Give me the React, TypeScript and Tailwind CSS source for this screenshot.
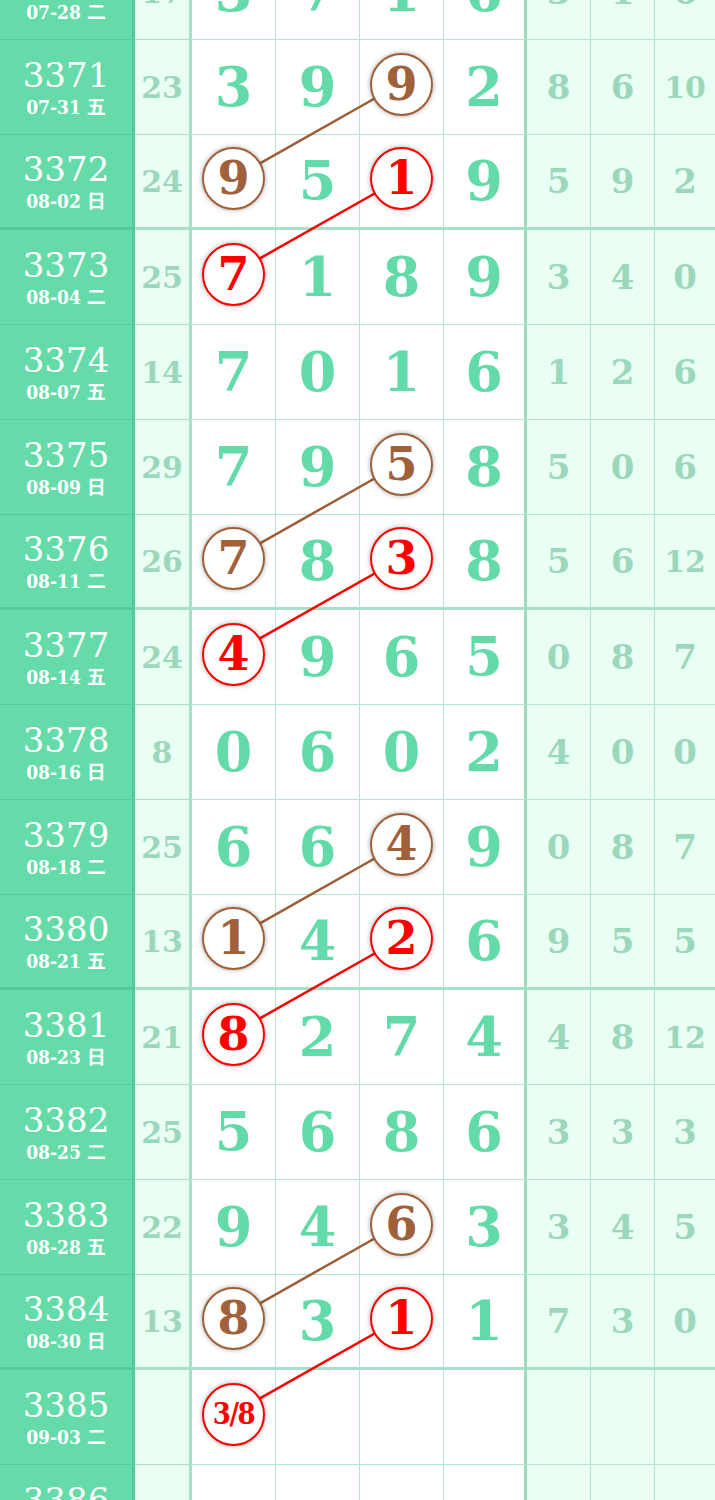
import React from 'react';

type Row = { n: number; d: string; s?: number; a: number[]; b: number[] };

const rows: Row[] = [
  { n: 3370, d: '07-28 二', s: 17, a: [3, 7, 1, 6], b: [3, 1, 6] },
  { n: 3371, d: '07-31 五', s: 23, a: [3, 9, 9, 2], b: [8, 6, 10] },
  { n: 3372, d: '08-02 日', s: 24, a: [9, 5, 1, 9], b: [5, 9, 2] },
  { n: 3373, d: '08-04 二', s: 25, a: [7, 1, 8, 9], b: [3, 4, 0] },
  { n: 3374, d: '08-07 五', s: 14, a: [7, 0, 1, 6], b: [1, 2, 6] },
  { n: 3375, d: '08-09 日', s: 29, a: [7, 9, 5, 8], b: [5, 0, 6] },
  { n: 3376, d: '08-11 二', s: 26, a: [7, 8, 3, 8], b: [5, 6, 12] },
  { n: 3377, d: '08-14 五', s: 24, a: [4, 9, 6, 5], b: [0, 8, 7] },
  { n: 3378, d: '08-16 日', s: 8, a: [0, 6, 0, 2], b: [4, 0, 0] },
  { n: 3379, d: '08-18 二', s: 25, a: [6, 6, 4, 9], b: [0, 8, 7] },
  { n: 3380, d: '08-21 五', s: 13, a: [1, 4, 2, 6], b: [9, 5, 5] },
  { n: 3381, d: '08-23 日', s: 21, a: [8, 2, 7, 4], b: [4, 8, 12] },
  { n: 3382, d: '08-25 二', s: 25, a: [5, 6, 8, 6], b: [3, 3, 3] },
  { n: 3383, d: '08-28 五', s: 22, a: [9, 4, 6, 3], b: [3, 4, 5] },
  { n: 3384, d: '08-30 日', s: 13, a: [8, 3, 1, 1], b: [7, 3, 0] },
  { n: 3385, d: '09-03 二', a: [], b: [] },
  { n: 3386, d: '09-05 五', a: [], b: [] },
];

// marked cells: "row-col" -> colour
const marks: Record<string, 'brown' | 'red'> = {
  '3371-2': 'brown', '3372-0': 'brown', '3372-2': 'red', '3373-0': 'red',
  '3375-2': 'brown', '3376-0': 'brown', '3376-2': 'red', '3377-0': 'red',
  '3379-2': 'brown', '3380-0': 'brown', '3380-2': 'red', '3381-0': 'red',
  '3383-2': 'brown', '3384-0': 'brown', '3384-2': 'red', '3385-0': 'red',
};

const ROW_H = 95;
const colX = [234, 318, 402, 485];
const serif = { fontFamily: '"DejaVu Serif", serif' };

// lines go from the 3rd column of one row to the 1st column of the next
const links = rows.flatMap((r, i) =>
  marks[`${r.n}-2`] ? [{ i, color: marks[`${r.n}-2`] === 'red' ? '#ff0000' : '#9e5f38' }] : []
);

function Circle({ color, children, small }: { color: 'brown' | 'red'; children: React.ReactNode; small?: boolean }) {
  const c = color === 'red' ? 'border-[#ff0000] text-[#ff0000]' : 'border-[#a0603a] text-[#a0603a]';
  return (
    <div className={`relative z-10 -mt-[5px] w-[63px] h-[63px] rounded-full bg-white border-[2.5px] ${c} flex items-center justify-center shadow-[0_0_5px_rgba(0,0,0,0.35)] font-bold ${small ? 'text-[29px] tracking-[-1.5px] font-stretch-condensed' : 'text-[46px]'}`}>
      {children}
    </div>
  );
}

export default function App() {
  return (
    <div className="w-[715px] h-[1500px] overflow-hidden bg-white" style={serif}>
      <div className="relative -mt-[55px]">
        {rows.map(r => {
          const thick = (r.n - 3372) % 4 === 0;
          const bb = thick ? 'border-b-[3px]' : 'border-b-[1.5px]';
          return (
            <div key={r.n} className="grid grid-cols-[135px_57px_84px_84px_84px_83px_64px_64px_60px] h-[95px]">
              <div className={`bg-[#64dba9] border-r-[3px] border-r-[#57c996] ${bb} border-b-[#57c996] flex flex-col items-center justify-center text-white`}>
                <div className="text-[34px] leading-[38px]">{r.n}</div>
                <div className="text-[19px] leading-[24px] font-bold font-stretch-condensed">
                  {r.d.split(' ')[0]} <span style={{ fontFamily: '"Noto Sans CJK SC", sans-serif' }}>{r.d.split(' ')[1]}</span>
                </div>
              </div>
              <div className={`bg-[#eafff4] border-r-[3px] border-r-[#a6e0c6] ${bb} border-b-[#a6e0c6] flex items-center justify-center text-[30px] font-bold text-[#9bd8bb]`}>
                {r.s}
              </div>
              {[0, 1, 2, 3].map(c => {
                const m = marks[`${r.n}-${c}`];
                const v = r.n === 3385 && c === 0 ? '3/8' : r.a[c];
                return (
                  <div key={c} className={`${c === 3 ? 'border-r-[3px] border-r-[#9edcc1]' : 'border-r-[1.5px] border-r-[#b2e7cf]'} ${bb} ${thick ? 'border-b-[#a6e0c6]' : 'border-b-[#b2e7cf]'} flex items-center justify-center text-[54px] font-bold text-[#62dba8]`}>
                    {m ? <Circle color={m} small={r.n === 3385}>{v}</Circle> : v}
                  </div>
                );
              })}
              {[0, 1, 2].map(c => (
                <div key={c} className={`bg-[#eafff4] ${c < 2 ? 'border-r-[1.5px] border-r-[#acE4cb]' : ''} ${bb} ${thick ? 'border-b-[#a6e0c6]' : 'border-b-[#b2e7cf]'} flex items-center justify-center font-bold text-[#9bd8bb] ${r.b[c] >= 10 ? 'text-[30px]' : 'text-[34px]'}`}>
                  {r.b[c]}
                </div>
              ))}
            </div>
          );
        })}
        <svg className="absolute left-0 top-0 z-[5] pointer-events-none" width={715} height={rows.length * ROW_H}>
          {links.map(l => (
            <line
              key={l.i}
              x1={colX[2]}
              y1={l.i * ROW_H + 43}
              x2={colX[0]}
              y2={(l.i + 1) * ROW_H + 43}
              stroke={l.color}
              strokeWidth={2.5}
            />
          ))}
        </svg>
      </div>
    </div>
  );
}
